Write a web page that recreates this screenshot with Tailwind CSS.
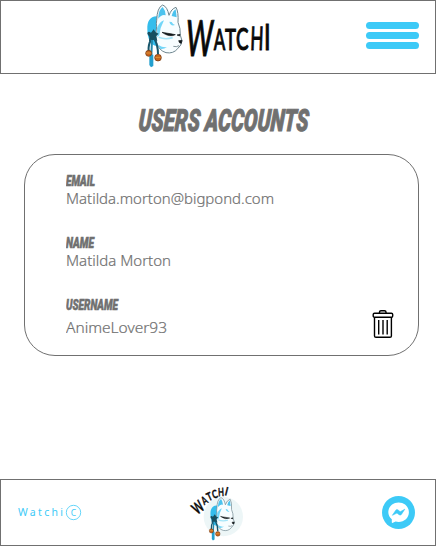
<!DOCTYPE html>
<html lang="en">
<head>
<meta charset="utf-8">
<title>Watchi</title>
<script src="https://cdn.jsdelivr.net/npm/@tailwindcss/browser@4"></script>
</head>
<body class="bg-white">
<svg class="hidden">
  <symbol id="mask" viewBox="0 0 160 228" overflow="visible">
    <path d="M72 50C44 44 33 62 34 88C34 116 45 140 64 138L86 91Z" fill="#35bdec"/>
    <path d="M62 62Q63 22 80 15Q94 20 99 46Q106 26 120 22Q128 36 126 67Q134 84 133 106L138 122Q137 136 125 146Q112 162 90 158Q69 152 62 128Q57 99 62 79Q60 70 62 62Z" fill="#f7fdff" stroke="#6f868f" stroke-width="3"/>
    <path d="M67 52Q68 29 80 21Q88 30 89 46Q77 42 67 56ZM107 48Q111 32 119 28L122 52Z" fill="#4cc3ee"/>
    <path d="M63 84Q70 66 84 61Q72 83 70 106L64 112ZM100 65L107 66Q111 74 117 75Q104 80 100 65ZM66 134Q82 144 94 141Q80 150 72 146Z" fill="#72d6f8"/>
    <path d="M68 112Q88 120 110 113" fill="none" stroke="#a5e5f9" stroke-width="5"/>
    <path d="M78 97Q92 99 118 104Q100 113 78 97ZM123 105L132 103L131 108ZM128 122L138 121L136 130Q129 130 128 122Z" fill="#101719" stroke="#101719" stroke-width="2"/>
    <path d="M112 139Q122 142 129 137" fill="none" stroke="#425a65" stroke-width="2"/>
    <path d="M34 101Q35 92 45 98L53 88L59 97L68 101L60 109L64 122L52 120L39 124L40 110Z" fill="#174f60"/>
    <path d="M46 118Q36 134 38 154M55 116Q66 136 66 162" fill="none" stroke="#17566b" stroke-width="6"/>
    <path d="M48 120L46 168" fill="none" stroke="#2389ab" stroke-width="6"/>
    <path d="M40 163L52 164L52 198L45 202L40 195Z" fill="#239fce"/>
    <g fill="#c7641c" stroke="#653315" stroke-width="2"><circle cx="38" cy="160" r="9"/><circle cx="66" cy="173" r="10"/></g>
    <path d="M30 159H46M58 172H74" stroke="#edae48" stroke-width="2"/>
  </symbol>
</svg>
<div class="flex h-[546px] w-[436px] flex-col overflow-hidden font-['Noto_Sans',sans-serif] text-[#707070]">
  <header class="flex h-[74px] shrink-0 justify-between border border-[#707070] pr-4 pl-[135px]">
    <svg class="-mt-px h-[76px] w-[145px] overflow-visible" viewBox="0 0 435 228">
      <use href="#mask" width="160" height="228"/>
      <g font-family="Lato, sans-serif" font-weight="500" fill="#090909" stroke="#090909" stroke-width="3">
        <text transform="translate(147 167) skewX(-4) scale(.52 1)" font-size="150">W</text>
        <text transform="translate(233 149) scale(.54 .94)" font-size="94">A</text>
        <text transform="translate(267 150) scale(.6 .94)" font-size="93">T</text>
        <text transform="translate(300 150) scale(.6 .96)" font-size="94">C</text>
        <text transform="translate(342 151) skewX(-2) scale(.53 1)" font-size="97">H</text>
        <text transform="translate(384 150) scale(.62 1)" font-size="112">I</text>
      </g>
    </svg>
    <button aria-label="Menu" class="mt-[21px] flex h-[27px] w-[53px] flex-col justify-between">
      <span class="h-[7px] w-full rounded-full bg-[#3dcaf7]"></span><span class="h-[7px] w-full rounded-full bg-[#3dcaf7]"></span><span class="h-[7px] w-full rounded-full bg-[#3dcaf7]"></span>
    </button>
  </header>
  <main class="flex grow flex-col">
    <h1 class="mt-[28px] ml-[130px]"><svg class="block h-[38px] w-[190px] overflow-visible" fill="currentColor" stroke="currentColor"><text transform="translate(8 29) skewX(-4)" font-family="Roboto, sans-serif" font-size="30.5" font-weight="900" font-style="italic" stroke-width="1" textLength="170" lengthAdjust="spacingAndGlyphs">USERS ACCOUNTS</text></svg></h1>
    <section class="mt-[14px] ml-6 flex h-[202px] w-[395px] justify-between rounded-[31px] border border-[#707070] pl-[41px]">
      <div class="flex flex-col gap-[12px] pt-[15px]">
        <svg class="block h-[50px] w-[220px]" fill="currentColor" stroke="currentColor"><text x="0" y="16" font-family="Roboto, sans-serif" font-size="15.5" font-weight="900" font-style="italic" stroke-width=".6" textLength="29" lengthAdjust="spacingAndGlyphs">EMAIL</text><text x="0" y="34" font-size="15" font-weight="300" stroke-width=".2" textLength="208" lengthAdjust="spacingAndGlyphs">Matilda.morton@bigpond.com</text></svg>
        <svg class="block h-[50px] w-[220px]" fill="currentColor" stroke="currentColor"><text x="0" y="16" font-family="Roboto, sans-serif" font-size="15.5" font-weight="900" font-style="italic" stroke-width=".6" textLength="28" lengthAdjust="spacingAndGlyphs">NAME</text><text x="0" y="34" font-size="15" font-weight="300" stroke-width=".2" textLength="105" lengthAdjust="spacingAndGlyphs">Matilda Morton</text></svg>
        <svg class="block h-[50px] w-[220px]" fill="currentColor" stroke="currentColor"><text x="0" y="16" font-family="Roboto, sans-serif" font-size="15.5" font-weight="900" font-style="italic" stroke-width=".6" textLength="52" lengthAdjust="spacingAndGlyphs">USERNAME</text><text x="0" y="39" font-size="15" font-weight="300" stroke-width=".2" textLength="101" lengthAdjust="spacingAndGlyphs">AnimeLover93</text></svg>
      </div>
      <button aria-label="Delete" class="mt-[154px] mr-6 h-[30px] w-[22px]">
        <svg class="h-[30px] w-[22px]" viewBox="0 0 22 30" fill="none" stroke="#000" stroke-width="1.4"><path d="M7.5 5V3Q7.5 1.8 9 1.8H12.5Q14 1.8 14 3V5"/><rect x="1.2" y="4.2" width="19.5" height="4" rx="1.3"/><path d="M2.5 8V27Q2.5 28.3 4 28.3H18Q19.4 28.3 19.4 27V8M6.7 11V25.5M11 11V25.5M15.2 11V25.5"/></svg>
      </button>
    </section>
  </main>
  <footer class="flex h-[67px] shrink-0 border border-[#707070] pr-5 pl-[17px]">
    <svg class="mt-[23px] h-5 w-[68px] text-[#3dcaf7]" fill="currentColor"><text x="0" y="13" font-size="10.5" textLength="45">Watchi</text><circle cx="55.5" cy="9.5" r="7.2" fill="none" stroke="currentColor" stroke-width=".8"/><text x="52.7" y="12.5" font-size="8.5">C</text></svg>
    <svg class="-mt-1 ml-[94px] h-[70px] w-[75px]" viewBox="0 0 225 210">
      <circle cx="130" cy="122" r="59" fill="#edf6f7"/>
      <use href="#mask" x="67" y="54.5" width="112" height="157"/>
      <g font-family="Lato, sans-serif" font-weight="700" fill="#0c0c0c" stroke="#0c0c0c">
        <text transform="translate(52 118) rotate(-38) scale(.62 1)" font-size="49">W</text>
        <text transform="translate(73 88) rotate(-32) scale(.68 1)" font-size="34">A</text>
        <text transform="translate(86 76) rotate(-25) scale(.75 1)" font-size="34">T</text>
        <text transform="translate(100 68) rotate(-16) scale(.72 1)" font-size="34">C</text>
        <text transform="translate(115 61) rotate(-3) scale(.68 1)" font-size="34">H</text>
        <text transform="translate(133 57) rotate(14) scale(.8 1)" font-size="35">I</text>
      </g>
    </svg>
    <button aria-label="Messenger" class="mt-4 ml-auto h-[33px] w-[33px]">
      <svg class="h-[33px] w-[33px]" viewBox="0 0 33 33"><circle cx="16.5" cy="16.5" r="16.5" fill="#3dcaf7"/><path d="M16.6 6.5C10.9 6.5 6.3 10.6 6.3 16.1Q6.3 20.6 9.8 23.3V26.2Q9.8 27.3 10.9 26.8L13.6 25.5Q15 25.9 16.6 25.9C22.4 25.9 26.9 21.7 26.9 16.2S22.4 6.5 16.6 6.5Z" fill="#fff"/><path d="M10.4 19.3L13.8 14.2Q14.8 13 16.1 14L18.2 15.8L22.8 13.2L19.4 18.4Q18.4 19.6 17.1 18.7L15 17Z" fill="#3dcaf7" stroke="#3dcaf7" stroke-width=".6"/></svg>
    </button>
  </footer>
</div>
</body>
</html>
